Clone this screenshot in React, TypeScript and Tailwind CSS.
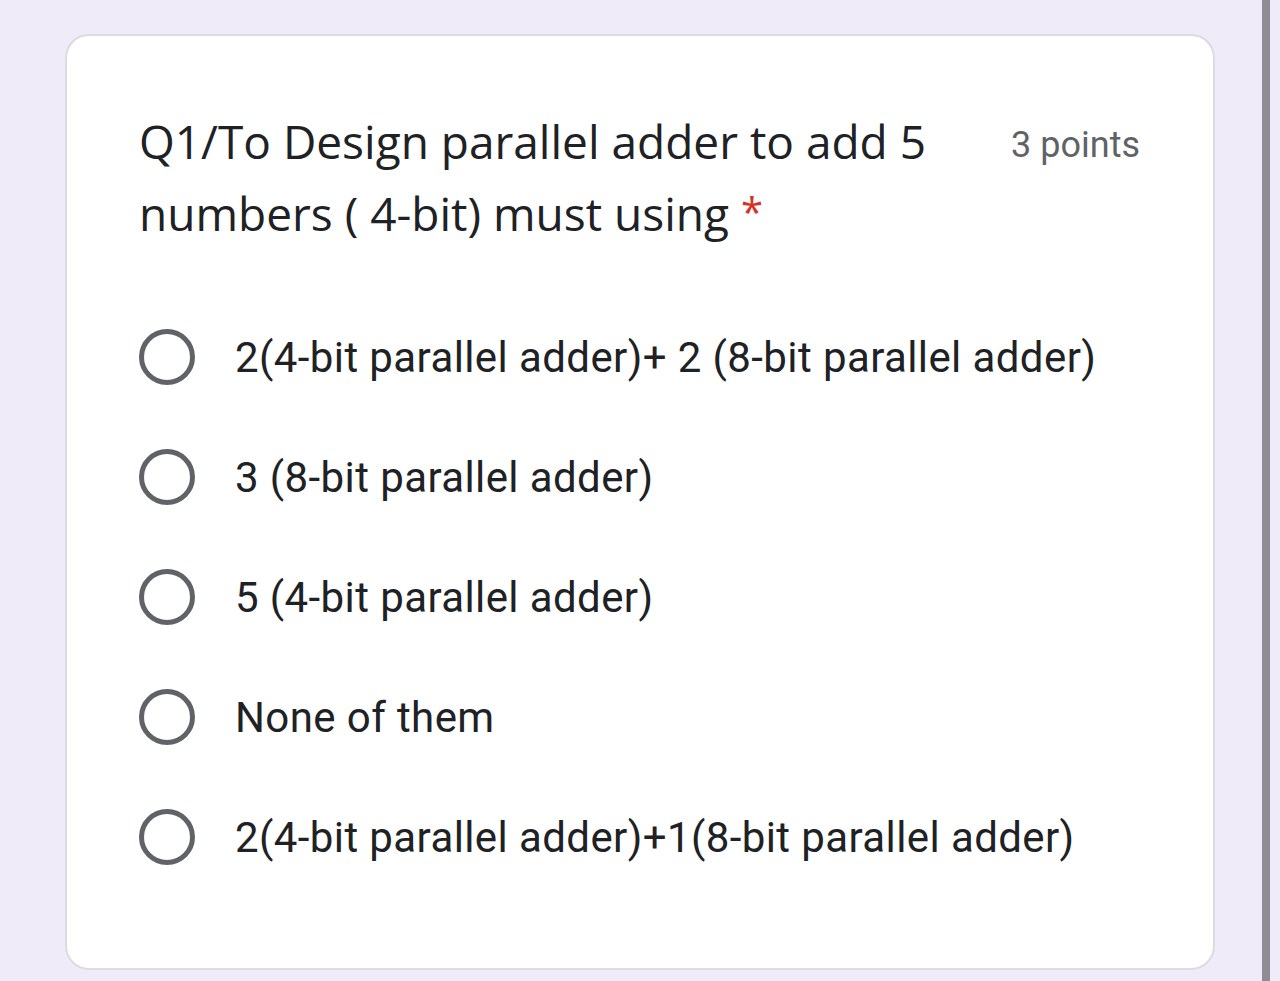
import React from "react";

const options = [
  "2(4-bit parallel adder)+ 2 (8-bit parallel adder)",
  "3 (8-bit parallel adder)",
  "5 (4-bit parallel adder)",
  "None of them",
  "2(4-bit parallel adder)+1(8-bit parallel adder)",
];

export default function App() {
  return (
    <div className="w-full h-[981px] bg-[#f0ebf8] flex overflow-hidden">
      <div className="pl-[65px] pt-[34px]">
        <div className="w-[1150px] h-[936px] bg-white border-2 border-[#dadce0] rounded-[24px] pl-[72px] pr-[73px] pt-[69px]">
          <div className="flex items-start justify-between">
            <div
              className="w-[800px] text-[46px] leading-[72px] text-[#202124] tracking-[0px]"
              style={{ fontFamily: "'Open Sans', 'Liberation Sans', sans-serif" }}
            >
              Q1/To Design parallel adder to add 5 numbers ( 4-bit) must using
              <span className="text-[#d93025] text-[40px] relative top-[-4px] ml-[12px]">*</span>
            </div>
            <div
              className="text-[36px] leading-[72px] text-[#5f6368] pt-[4px]"
              style={{ fontFamily: "Roboto, 'Liberation Sans', sans-serif" }}
            >
              3 points
            </div>
          </div>
          <div className="mt-[45px] flex flex-col">
            {options.map((o) => (
              <div key={o} className="h-[120px] flex items-center">
                <div className="w-[56px] h-[56px] rounded-full border-[5px] border-[#5f6368] shrink-0" />
                <div
                  className="ml-[40px] text-[42px] tracking-[0.4px] text-[#202124]"
                  style={{ fontFamily: "Roboto, 'Liberation Sans', sans-serif" }}
                >
                  {o}
                </div>
              </div>
            ))}
          </div>
        </div>
      </div>
      <div className="ml-[47px] w-[8px] h-full bg-[#8f8c94]" />
    </div>
  );
}
